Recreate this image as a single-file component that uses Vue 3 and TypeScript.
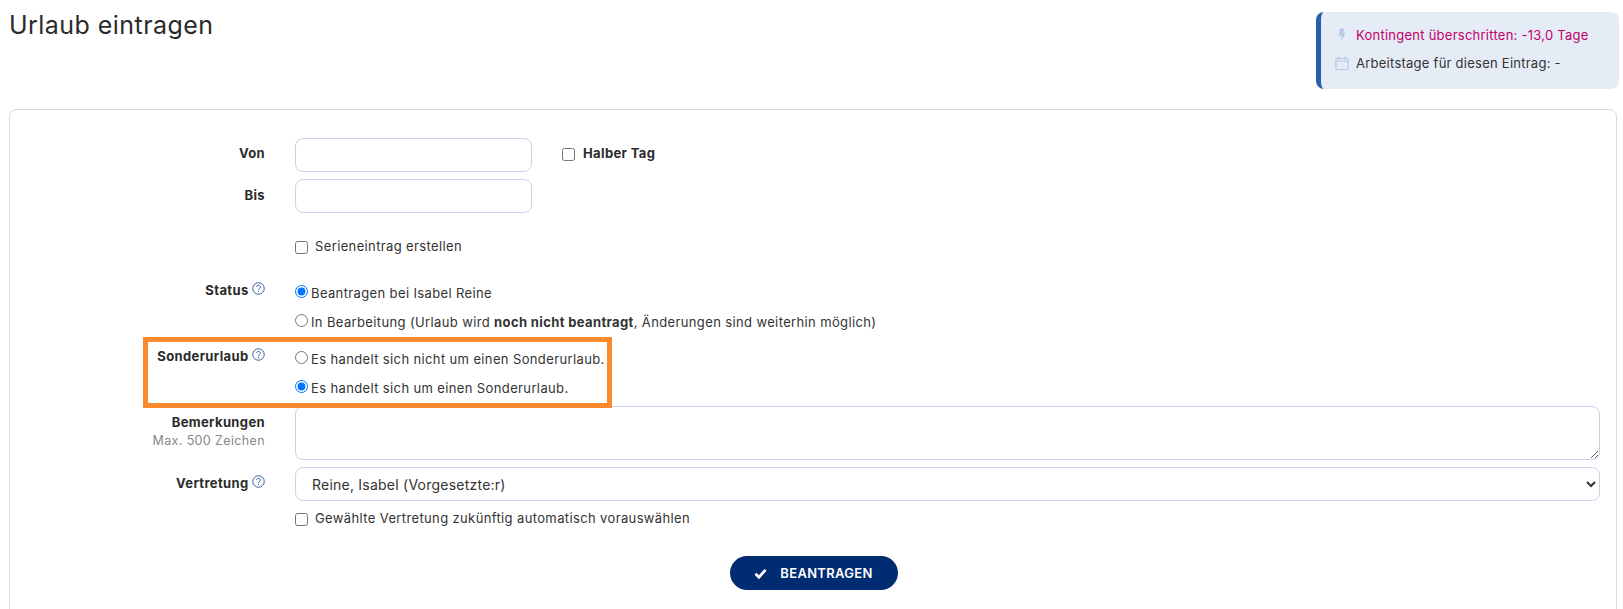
<template>
  <div class="page">
    <div class="top">
      <h1>Urlaub eintragen</h1>
      <div class="info-box">
        <div class="info-line over">
          <svg class="info-icon" viewBox="0 0 14 14" width="14" height="14">
            <path d="M5 .5h4.6L8.2 5h2.4L5.8 13.5l1-5.8H3.8z" fill="#b7c8e6" />
          </svg>
          <span>Kontingent überschritten: -13,0 Tage</span>
        </div>
        <div class="info-line">
          <svg class="info-icon" viewBox="0 0 14 14" width="14" height="14">
            <rect x="1" y="2.5" width="12" height="11" rx="1" fill="none" stroke="#b7c8e6" stroke-width="1.2" />
            <path d="M1 5h12M4 .5v3M10 .5v3" fill="none" stroke="#b7c8e6" stroke-width="1.2" />
          </svg>
          <span>Arbeitstage für diesen Eintrag: -</span>
        </div>
      </div>
    </div>

    <form class="card" @submit.prevent>
      <div class="highlight"></div>

      <div class="row row-von">
        <label class="lbl lbl-input">Von</label>
        <div class="field inline">
          <input class="text-input" type="text" />
          <label class="half"><input type="checkbox" /> <b>Halber Tag</b></label>
        </div>
      </div>
      <div class="row row-bis">
        <label class="lbl lbl-input">Bis</label>
        <div class="field"><input class="text-input" type="text" /></div>
      </div>
      <div class="row row-serie">
        <span class="lbl"></span>
        <label class="field check"><input type="checkbox" /> Serieneintrag erstellen</label>
      </div>

      <div v-for="group in radioGroups" :key="group.name" class="row row-radio">
        <span class="lbl lbl-radio">
          {{ group.label }}
          <svg class="help" viewBox="0 0 14 14" width="13" height="13">
            <circle cx="7" cy="7" r="6.2" fill="none" stroke="#1d3f94" stroke-width="0.9" />
            <path d="M5 5.4C5 3 9 3 9 5.4 9 7 7.1 7 7.1 8.8" fill="none" stroke="#1d3f94" stroke-width="0.9" />
            <circle cx="7.1" cy="10.4" r="0.6" fill="#1d3f94" />
          </svg>
        </span>
        <div class="field radios">
          <label v-for="opt in group.options" :key="opt.id" class="radio">
            <input type="radio" :name="group.name" :checked="group.selected === opt.id" />
            <span>{{ opt.before }}<b v-if="opt.bold">{{ opt.bold }}</b>{{ opt.after }}</span>
          </label>
        </div>
      </div>

      <div class="row row-note">
        <div class="lbl lbl-input stacked">
          <span>Bemerkungen</span>
          <small>Max. 500 Zeichen</small>
        </div>
        <div class="field"><textarea class="area"></textarea></div>
      </div>
      <div class="row row-select">
        <span class="lbl lbl-select">
          Vertretung
          <svg class="help" viewBox="0 0 14 14" width="13" height="13">
            <circle cx="7" cy="7" r="6.2" fill="none" stroke="#1d3f94" stroke-width="0.9" />
            <path d="M5 5.4C5 3 9 3 9 5.4 9 7 7.1 7 7.1 8.8" fill="none" stroke="#1d3f94" stroke-width="0.9" />
            <circle cx="7.1" cy="10.4" r="0.6" fill="#1d3f94" />
          </svg>
        </span>
        <div class="field">
          <select class="sel">
            <option>Reine, Isabel (Vorgesetzte:r)</option>
          </select>
        </div>
      </div>
      <div class="row row-auto">
        <span class="lbl"></span>
        <label class="field check"><input type="checkbox" /> Gewählte Vertretung zukünftig automatisch vorauswählen</label>
      </div>

      <div class="actions">
        <button class="btn" type="submit">
          <svg viewBox="0 0 14 14" width="13" height="13">
            <path d="M1.6 7.2l3.7 3.7 7.2-7.8" fill="none" stroke="#fff" stroke-width="3" />
          </svg>
          BEANTRAGEN
        </button>
      </div>
    </form>
  </div>
</template>

<script setup lang="ts">
interface RadioOption {
  id: string
  before: string
  bold?: string
  after?: string
}

interface RadioGroup {
  name: string
  label: string
  selected: string
  options: RadioOption[]
}

const radioGroups: RadioGroup[] = [
  {
    name: 'status',
    label: 'Status',
    selected: 'request',
    options: [
      { id: 'request', before: 'Beantragen bei Isabel Reine' },
      {
        id: 'draft',
        before: 'In Bearbeitung (Urlaub wird ',
        bold: 'noch nicht beantragt',
        after: ', Änderungen sind weiterhin möglich)'
      }
    ]
  },
  {
    name: 'special',
    label: 'Sonderurlaub',
    selected: 'yes',
    options: [
      { id: 'no', before: 'Es handelt sich nicht um einen Sonderurlaub.' },
      { id: 'yes', before: 'Es handelt sich um einen Sonderurlaub.' }
    ]
  }
]
</script>

<style>
html,
body {
  margin: 0;
  height: 609px;
  overflow: hidden;
  background: #fff;
}
</style>

<style scoped>
.page {
  padding: 0 6px 0 9px;
  font-family: Inter, "Open Sans", sans-serif;
  font-size: 13px;
  letter-spacing: 0.37px;
  color: #333;
}

.top {
  display: flex;
  justify-content: space-between;
  align-items: flex-start;
  height: 109px;
}

h1 {
  margin: 10px 0 0;
  font-size: 25px;
  line-height: 30px;
  font-weight: 400;
  letter-spacing: 0.45px;
  color: #2b2b2b;
}

.info-box {
  box-sizing: border-box;
  width: 303px;
  height: 77px;
  margin: 12px -2px 0 0;
  padding: 9px 10px 0 14px;
  background: #e6ecf6;
  border-left: 5px solid #2a5db0;
  border-radius: 8px;
  letter-spacing: 0.25px;
}

.info-line {
  display: flex;
  align-items: center;
  gap: 7px;
  height: 28px;
}

.info-line.over {
  color: #c2006b;
}

.info-icon {
  flex: none;
}

.card {
  position: relative;
  box-sizing: border-box;
  height: 560px;
  padding: 28px 16px 0 17px;
  border: 1px solid #d9d9d9;
  border-radius: 8px;
}

/* orange marker drawn over the form */
.highlight {
  position: absolute;
  left: 133px;
  top: 227px;
  width: 459px;
  height: 61px;
  border: 5px solid #fb8a2e;
}

.row {
  display: grid;
  grid-template-columns: 238px 1fr;
  column-gap: 30px;
}

.lbl {
  text-align: right;
  font-weight: 700;
  color: #2b2b2b;
  line-height: 16px;
}

.lbl-input {
  padding-top: 7px;
}

.lbl-select {
  padding-top: 8px;
}

.lbl-radio {
  margin-top: -1px;
}

.help {
  vertical-align: 0;
}

.stacked {
  display: flex;
  flex-direction: column;
}

.stacked span {
  padding-top: 1px;
}

.stacked small {
  margin-top: 3px;
  font-size: 12.5px;
  font-weight: 400;
  color: #888;
}

.inline {
  display: flex;
  align-items: center;
  gap: 30px;
}

.text-input,
.area,
.sel {
  box-sizing: border-box;
  border: 1px solid #c9d2ea;
  border-radius: 8px;
  background: #fff;
  font: inherit;
  color: #333;
}

.text-input {
  display: block;
  width: 237px;
  height: 34px;
}

.half {
  display: flex;
  align-items: center;
  gap: 5px;
  margin-top: -4px;
}

.half input,
.check input {
  margin: 3px 3px 0 0;
}

.half b {
  font-weight: 700;
  color: #2b2b2b;
}

.row-bis {
  margin-top: 7px;
}

.row-bis .lbl-input {
  padding-top: 8px;
}

.row-serie {
  margin-top: 24px;
}

.check {
  display: flex;
  align-items: center;
  gap: 4px;
  height: 18px;
}

.row-radio .radios {
  display: flex;
  flex-direction: column;
  gap: 10px;
}

.row-radio {
  margin-top: 18px;
}

.row-serie + .row-radio {
  margin-top: 28px;
}

.radio {
  display: flex;
  align-items: center;
  gap: 3px;
  height: 19px;
}

.radio input {
  margin: 0 0 2px;
}

.radio b {
  font-weight: 700;
}

.row-note {
  margin-top: 9px;
}

.area {
  display: block;
  width: 100%;
  height: 54px;
}

.row-select {
  margin-top: 7px;
}

.sel {
  display: block;
  width: 100%;
  height: 34px;
  padding: 0 12px;
  font-size: 14px;
  letter-spacing: 0.23px;
}

.row-auto {
  margin-top: 8px;
}

.actions {
  display: flex;
  justify-content: center;
  margin-top: 29px;
}

.btn {
  display: flex;
  align-items: center;
  justify-content: center;
  gap: 13px;
  width: 168px;
  height: 34px;
  padding: 0;
  border: none;
  border-radius: 17px;
  background: #002d72;
  color: #fff;
  font: inherit;
  font-weight: 600;
  letter-spacing: 0.3px;
}
</style>
